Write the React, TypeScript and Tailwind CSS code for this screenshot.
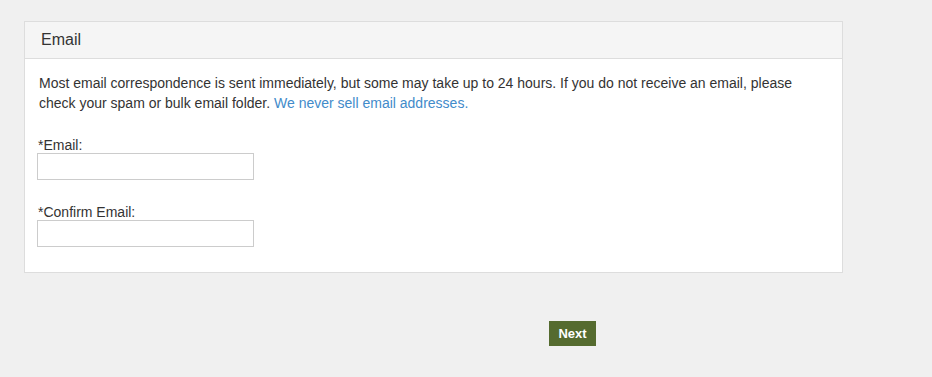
import React from "react";

export default function App() {
  return (
    <div
      className="min-h-[377px] w-full bg-[#f0f0f0] pt-[21px] pl-[24px]"
      style={{ fontFamily: '"Liberation Sans", Arial, sans-serif' }}
    >
      <div className="w-[819px] border border-[#dddddd] bg-white">
        <div className="h-[37px] border-b border-[#dddddd] bg-[#f5f5f5] pl-[16px] pt-[8px] text-[16px] leading-[20px] text-[#333333]">
          Email
        </div>
        <div className="px-[14px] pt-[14px] pb-[25px] text-[14px] text-[#333333]">
          <p className="leading-[20px]">
            Most email correspondence is sent immediately, but some may take up to 24 hours. If you do not receive an email, please check your spam or bulk email folder.{" "}
            <a className="text-[#428bca]" href="#">
              We never sell email addresses.
            </a>
          </p>
          <div className="mt-[24px] -ml-[2px]">
            <label className="block pl-[1px] leading-[16px]">*Email:</label>
            <input
              type="text"
              className="block h-[27px] w-[217px] border border-[#cccccc] bg-white outline-none"
            />
          </div>
          <div className="mt-[24px] -ml-[2px]">
            <label className="block pl-[1px] leading-[16px]">*Confirm Email:</label>
            <input
              type="text"
              className="block h-[27px] w-[217px] border border-[#cccccc] bg-white outline-none"
            />
          </div>
        </div>
      </div>
      <div className="mt-[48px] pl-[525px]">
        <button className="h-[25px] w-[47px] bg-[#556b2f] text-[13px] font-bold text-white">
          Next
        </button>
      </div>
    </div>
  );
}
